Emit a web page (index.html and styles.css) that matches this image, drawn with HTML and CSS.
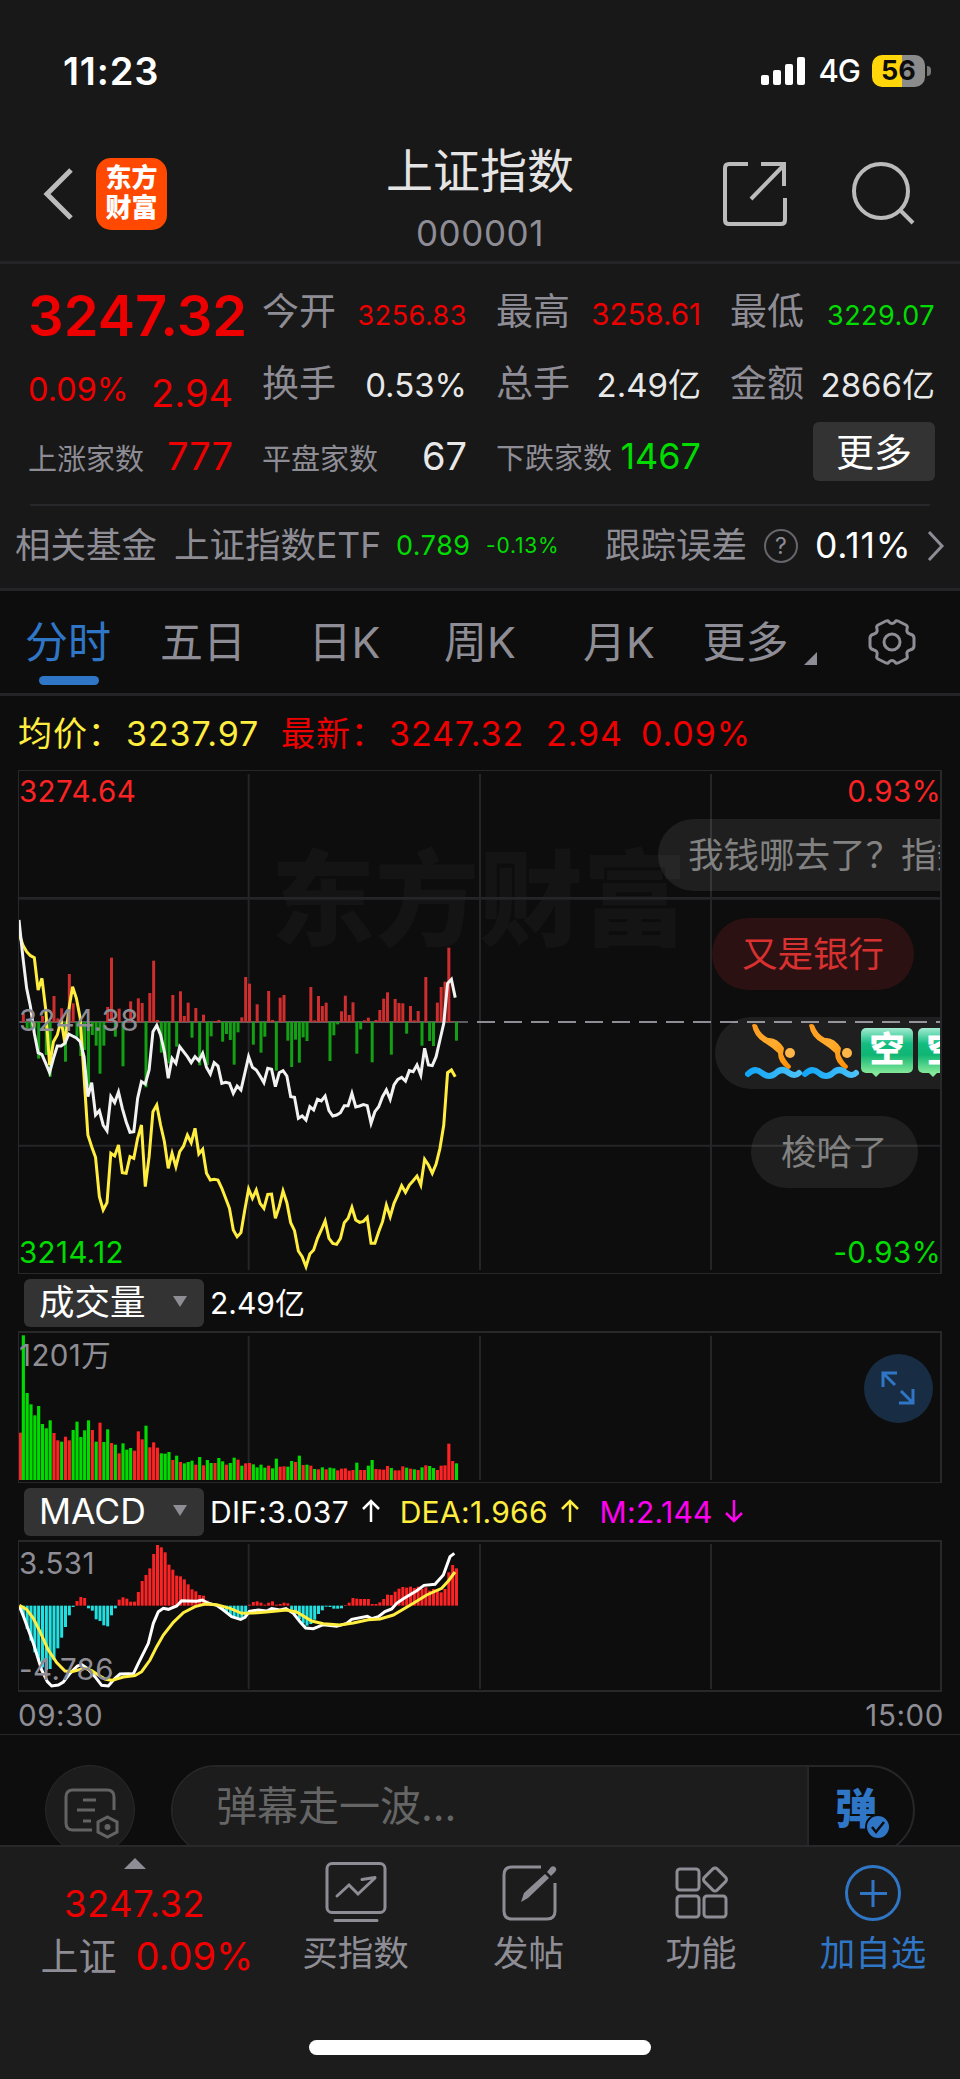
FILE: index.html
```html
<!DOCTYPE html>
<html lang="zh-CN">
<head>
    <meta charset="UTF-8">
    <meta name="viewport" content="width=device-width, initial-scale=1.0">
    <title>上证指数</title>
    <link rel="stylesheet" href="styles.css">
</head>
<body>
    <div class="status">
        <span class="time">11:23</span>
        <svg class="signal" width="44" height="28" viewBox="0 0 44 28">
            <rect x="0" y="18" width="8" height="10" rx="2"/>
            <rect x="12" y="13" width="8" height="15" rx="2"/>
            <rect x="24" y="7" width="8" height="21" rx="2"/>
            <rect x="36" y="0" width="8" height="28" rx="2"/>
        </svg>
        <span class="net">4G</span>
        <span class="battery">56</span>
        <span class="cap"></span>
    </div>

    <header class="header">
        <svg class="back" width="32" height="54" viewBox="0 0 32 54"><path d="M28 3 L4 27 L28 51"/></svg>
        <div class="logo"><span>东方</span><span>财富</span></div>
        <div class="title">
            <h1>上证指数</h1>
            <p>000001</p>
        </div>
        <svg class="share" width="64" height="64" viewBox="0 0 64 64">
            <path d="M25 2 H6 Q2 2 2 6 V58 Q2 62 6 62 H58 Q62 62 62 58 V36 M38 2 H61 V24 M61 3 L28 37"/>
        </svg>
        <svg class="search" width="64" height="64" viewBox="0 0 64 64">
            <circle cx="29" cy="29" r="27"/><path d="M48 48 L61 61"/>
        </svg>
    </header>

    <section class="quote">
        <div class="cell first"><b class="price">3247.32</b></div>
        <div class="cell"><span>今开</span><em class="s27 red">3256.83</em></div>
        <div class="cell"><span>最高</span><em class="s29 red">3258.61</em></div>
        <div class="cell"><span>最低</span><em class="s27 green">3229.07</em></div>
        <div class="cell first"><em class="rate">0.09%</em><em class="change">2.94</em></div>
        <div class="cell"><span>换手</span><em>0.53%</em></div>
        <div class="cell"><span>总手</span><em>2.49亿</em></div>
        <div class="cell"><span>金额</span><em>2866亿</em></div>
        <div class="cell"><span class="small">上涨家数</span><em class="s38 red">777</em></div>
        <div class="cell"><span class="small">平盘家数</span><em class="s38">67</em></div>
        <div class="cell"><span class="small">下跌家数</span><em class="s36 green">1467</em></div>
        <div class="cell last"><button type="button" class="more">更多</button></div>
    </section>

    <section class="fund">
        <span>相关基金</span>
        <span>上证指数ETF</span>
        <span class="s27 green">0.789</span>
        <span class="s21 green">-0.13%</span>
        <span>跟踪误差</span>
        <i class="help">?</i>
        <span class="white">0.11%</span>
        <svg width="18" height="32" viewBox="0 0 18 32"><path d="M2 2 L15 16 L2 30"/></svg>
    </section>

    <nav class="tabs">
        <a class="tab active">分时</a>
        <a class="tab">五日</a>
        <a class="tab">日K</a>
        <a class="tab">周K</a>
        <a class="tab">月K</a>
        <a class="tab">更多</a>
        <i class="corner"></i>
        <svg class="gear" width="48" height="48" viewBox="0 0 48 48">
            <path d="M18 3 Q20 2 21 4 Q24 7 27 4 Q28 2 30 3 L38 7 Q40 8 39 11 Q38 15 42 16 Q46 17 46 20 V28 Q46 31 42 32 Q38 33 39 37 Q40 40 38 41 L30 45 Q28 46 27 44 Q24 41 21 44 Q20 46 18 45 L10 41 Q8 40 9 37 Q10 33 6 32 Q2 31 2 28 V20 Q2 17 6 16 Q10 15 9 11 Q8 8 10 7 Z"/>
            <circle cx="24" cy="24" r="8"/>
        </svg>
    </nav>

    <div class="legend">
        <span class="yellow">均价：</span>
        <span class="yellow">3237.97</span>
        <span>最新：</span>
        <span>3247.32</span>
        <span>2.94</span>
        <span>0.09%</span>
    </div>

    <div class="chart main">
        <div class="watermark">东方财富</div>
        <svg id="price" viewBox="54 30 2772 1512">
            <path class="grid" d="M746 42 V1530 M1440 42 V1530 M2133 42 V1530 M56 1157 H2824"/>
            <path class="grid thick" d="M56 415 H2824"/>
        </svg>
        <span class="label top red2">3274.64</span>
        <span class="label middle">3244.38</span>
        <span class="label bottom green">3214.12</span>
        <span class="label top right red2">0.93%</span>
        <span class="label bottom right green">-0.93%</span>
        <div class="bullet b1">我钱哪去了？指数</div>
        <div class="bullet b2">又是银行</div>
        <div class="bullet b3">
            <svg class="swim" width="57" height="57" viewBox="0 0 57 57"><use href="#swimmer"/></svg>
            <svg class="swim" width="57" height="57" viewBox="0 0 57 57"><use href="#swimmer"/></svg>
            <i class="kong">空</i><i class="kong">空</i>
        </div>
        <div class="bullet b4">梭哈了</div>
    </div>

    <div class="indicator">
        <button type="button" class="select">成交量</button>
        <span>2.49亿</span>
    </div>
    <div class="chart volume">
        <svg id="volume" viewBox="54 183 2772 456">
            <path class="grid" d="M746 197 V630 M1440 197 V630 M2133 197 V630"/>
        </svg>
        <span class="label">1201万</span>
        <div class="expand">
            <svg width="34" height="34" viewBox="0 0 34 34">
                <path d="M2 16 V2 H16 M2 2 L14 14 M32 18 V32 H18 M32 32 L20 20"/>
            </svg>
        </div>
    </div>

    <div class="indicator">
        <button type="button" class="select">MACD</button>
        <span class="dif">DIF:3.037 <svg class="arrow" viewBox="0 0 18 24"><path d="M9 23 V2 M1 10 L9 2 L17 10"/></svg></span>
        <span class="dea">DEA:1.966 <svg class="arrow" viewBox="0 0 18 24"><path d="M9 23 V2 M1 10 L9 2 L17 10"/></svg></span>
        <span class="m">M:2.144 <svg class="arrow" viewBox="0 0 18 24"><path d="M9 1 V22 M1 14 L9 22 L17 14"/></svg></span>
    </div>
    <div class="chart macd">
        <svg id="macd" viewBox="54 30 2772 456">
            <path class="grid" d="M746 42 V477 M1440 42 V477 M2133 42 V477"/>
        </svg>
        <span class="label top">3.531</span>
        <span class="label bottom">-4.786</span>
    </div>
    <div class="axis"><span>09:30</span><span>15:00</span></div>

    <div class="danmu">
        <div class="setting">
            <svg width="56" height="52" viewBox="0 0 56 52">
                <path d="M28 42 H9 Q2 42 2 35 V9 Q2 2 9 2 H43 Q50 2 50 9 V22 M19 12 H32 M13 22 H31 M19 33 H27"/>
                <path d="M43.500 29 L53 34 V44 L43.500 49 L34 44 V34 Z"/>
                <circle cx="43.500" cy="39" r="1.500"/>
            </svg>
        </div>
        <div class="input">
            <span class="placeholder">弹幕走一波...</span>
            <div class="switch">
                弹
                <svg width="24" height="24" viewBox="0 0 24 24"><circle cx="12" cy="12" r="12"/><path d="M6 12 L10 17 L18 7"/></svg>
            </div>
        </div>
    </div>

    <footer class="footer">
        <div class="index">
            <i class="up"></i>
            <b>3247.32</b>
            <p>上证<em>0.09%</em></p>
        </div>
        <a class="item">
            <svg width="62" height="60" viewBox="0 0 62 60">
                <rect x="2" y="1.500" width="58" height="49" rx="5"/>
                <path d="M12 34 L24 23 L33 32 L50 16 M37 17.500 L50 15.500 M10 58.500 H52" stroke-linecap="round"/>
            </svg>
            <span>买指数</span>
        </a>
        <a class="item">
            <svg width="56" height="60" viewBox="0 0 56 60">
                <path d="M40 5 H11 Q3 5 3 13 V49 Q3 57 11 57 H46 Q54 57 54 49 V21"/>
                <path class="fill" d="M20 40 L23 31 L44 12 L48 16 L27 36 Z M46 10 L50 5 Q53 3 55 6 Q56 8 54 10 L50 14 Z"/>
            </svg>
            <span>发帖</span>
        </a>
        <a class="item">
            <svg width="54" height="60" viewBox="0 0 54 60">
                <rect x="3" y="7" width="22" height="21" rx="3"/>
                <rect x="3" y="34" width="22" height="21" rx="3"/>
                <rect x="30" y="34" width="22" height="21" rx="3"/>
                <rect x="32" y="8.500" width="18" height="18" rx="3" transform="rotate(45 41 17.500)"/>
            </svg>
            <span>功能</span>
        </a>
        <a class="item blue">
            <svg width="56" height="60" viewBox="0 0 56 60">
                <circle cx="28" cy="31" r="26.500"/><path d="M28 18 V45 M15 31.500 H42"/>
            </svg>
            <span>加自选</span>
        </a>
        <div class="home"></div>
    </footer>

    <svg width="0" height="0" class="defs">
        <defs>
            <linearGradient id="skin" x1="0" y1="0" x2="1" y2="1">
                <stop offset="0" stop-color="#ff9a1c"/><stop offset="0.500" stop-color="#ffac2e"/><stop offset="1" stop-color="#ff8c00"/>
            </linearGradient>
            <linearGradient id="sea"><stop offset="0" stop-color="#12a5f8"/><stop offset="1" stop-color="#4bc2f8"/></linearGradient>
            <g id="swimmer">
                <path d="M7 2 Q9 0 12 2 Q15 11 23 15 Q32 14 39 25 L38 31 Q40 37 46 43 Q46 46 43 46 Q33 40 33 30 Q28 25 20 20 Q9 14 7 2 Z" fill="url(#skin)"/>
                <circle cx="45" cy="30" r="5" fill="#ffb648"/>
                <path d="M3 51 Q10 44 17 50 Q24 56 31 50 Q37 44 44 50 Q50 54 54 50" fill="none" stroke="url(#sea)" stroke-width="6" stroke-linecap="round"/>
            </g>
        </defs>
    </svg>
    <script src="script.js"></script>
</body>
</html>
```
FILE: styles.css
```css
*{
    box-sizing: border-box;
}
body{
    margin: 0;
    width: 960px;
    height: 2079px;
    overflow: hidden;
    background-color: #0d0d0d;
    color: #8e8d95;
    font-family: Inter, "Noto Sans CJK SC", sans-serif;
    font-weight: 400;
}
h1, p{
    margin: 0;
    font-weight: 400;
}
em, i{
    font-style: normal;
}
svg{
    display: block;
    fill: none;
    flex: none;
}
button{
    border: none;
    padding: 0;
    font-family: inherit;
    color: #fff;
    background-color: #333;
}
.defs{
    position: absolute;
}
.red{
    color: #ee0000 !important;
}
.red2{
    color: #fb2323 !important;
}
.green{
    color: #00dc00 !important;
}
.s21{
    font-size: 21px !important;
    letter-spacing: 0.8px;
}
.s27{
    font-size: 27px !important;
    letter-spacing: 0.5px;
}
.s29{
    font-size: 29.500px !important;
}
.s36{
    font-size: 36px !important;
}
.s38{
    font-size: 38px !important;
}

/* 状态栏 */
.status{
    height: 141px;
    padding: 0 29px 0 63px;
    display: flex;
    align-items: center;
    background-color: #181818;
    color: #fff;
}
.time{
    font-size: 38px;
    font-weight: 600;
    letter-spacing: 0.8px;
    margin-right: auto;
}
.signal{
    fill: #fff;
}
.net{
    margin: 0 12px 0 13px;
    font-size: 31px;
    font-weight: 500;
    letter-spacing: -1px;
}
.battery{
    width: 53px;
    height: 32px;
    border-radius: 10px;
    line-height: 32px;
    text-align: center;
    font-size: 27px;
    font-weight: 700;
    color: #0d0d0d;
    background: linear-gradient(90deg, #ffd60a 57%, #8b8b8b 57%);
}
.cap{
    width: 4px;
    height: 10px;
    margin-left: 2px;
    border-radius: 0 4px 4px 0;
    background-color: #777;
}

/* 标题栏 */
.header{
    position: relative;
    height: 123px;
    padding: 0 44px 14px 43px;
    display: flex;
    align-items: center;
    background-color: #181818;
    border-bottom: 3px solid #242427;
}
.header svg{
    stroke: #bbb;
    stroke-width: 4;
}
.back{
    margin-right: 21px;
}
.header .back{
    stroke-width: 5;
}
.logo{
    width: 71px;
    height: 72px;
    margin-right: auto;
    padding-top: 5px;
    display: flex;
    flex-direction: column;
    align-items: center;
    border-radius: 15px;
    background-color: #ff4800;
    color: #fff;
    font-size: 26px;
    font-weight: 900;
    line-height: 30px;
}
.title{
    position: absolute;
    left: 0;
    right: 0;
    top: 0;
    text-align: center;
}
.title h1{
    font-size: 47px;
    line-height: 60px;
    color: #e4e4e4;
}
.title p{
    font-size: 35px;
    line-height: 64px;
    letter-spacing: 0.6px;
}
.share{
    margin-right: 65px;
}

/* 行情 */
.quote{
    height: 240px;
    padding: 12px 25px 0 28px;
    display: grid;
    grid-template-columns: repeat(4, minmax(0, 1fr));
    grid-auto-rows: 72px;
    column-gap: 29px;
    background-color: #181818;
    line-height: 72px;
    white-space: nowrap;
}
.cell{
    display: flex;
    justify-content: space-between;
    align-items: baseline;
}
.cell span{
    font-size: 37px;
}
.cell .small{
    font-size: 29px;
}
.cell em{
    font-size: 33px;
    color: #e8e8e8;
}
.first{
    align-items: center;
}
.first .price{
    padding-top: 7px;
    font-size: 56px;
    font-weight: 600;
    color: #ee0000;
}
.first .rate{
    padding-top: 12px;
    font-size: 32.500px;
    color: #ee0000;
}
.first .change{
    padding-top: 18px;
    font-size: 38px;
    color: #ee0000;
}
.last{
    align-items: center;
    justify-content: flex-end;
}
.more{
    width: 122px;
    height: 59px;
    margin-bottom: 9px;
    border-radius: 6px;
    line-height: 61px;
    font-size: 38px;
}
.fund{
    position: relative;
    height: 87px;
    padding-left: 15px;
    display: grid;
    grid-template-columns: 159px 222px 90px 119px 159px 51px 112px auto;
    align-items: center;
    background-color: #181818;
    border-bottom: 3px solid #242427;
    font-size: 35.500px;
    line-height: 84px;
    white-space: nowrap;
}
.fund::before{
    content: "";
    position: absolute;
    left: 30px;
    right: 30px;
    top: 0;
    height: 2px;
    background-color: #28282b;
}
.fund .white{
    color: #fff;
    letter-spacing: 0.8px;
}
.fund svg{
    stroke: #8e8d95;
    stroke-width: 3;
}
.help{
    width: 34px;
    height: 34px;
    border: 2px solid #66656c;
    border-radius: 100%;
    line-height: 30px;
    text-align: center;
    font-size: 23px;
}

/* 周期 */
.tabs{
    height: 105px;
    display: grid;
    grid-template-columns: 136px 134px 149px 122px 156px 97px 74px auto;
    border-bottom: 3px solid #242427;
    font-size: 43px;
    line-height: 103px;
}
.tab{
    position: relative;
    text-align: center;
}
.tab.active{
    color: #3076c6;
}
.tab.active::after{
    content: "";
    position: absolute;
    left: 39px;
    bottom: 9px;
    width: 60px;
    height: 9px;
    border-radius: 5px;
    background-color: #3076c6;
}
.corner{
    margin: 61px 0 0 10px;
    border-left: 13px solid transparent;
    border-bottom: 13px solid #8e8d95;
    width: 0;
    height: 0;
}
.gear{
    margin-top: 27px;
    stroke: #8e8d95;
    stroke-width: 3;
}
.legend{
    height: 74px;
    padding-left: 18px;
    display: grid;
    grid-template-columns: 108px 155px 108px 157px 95px auto;
    line-height: 75px;
    font-size: 34px;
    letter-spacing: 0.9px;
    color: #ee0000;
    white-space: nowrap;
}
.legend .yellow{
    color: #ffee3f;
}

/* 图表 */
.chart{
    position: relative;
    width: 924px;
    margin-left: 18px;
    overflow: hidden;
    border: 1px solid #28282a;
    border-right-width: 2px;
}
.chart > svg{
    position: absolute;
    left: -1px;
    top: -1px;
    width: 924px;
}
.main{
    height: 504px;
}
.volume{
    height: 152px;
    border-top-width: 2px;
}
.volume > svg, .macd > svg{
    top: -2px;
}
.macd{
    height: 152px;
    border-width: 2px 2px 2px 1px;
}
.grid{
    stroke: #252527;
    stroke-width: 6;
}
.grid.thick{
    stroke-width: 8;
}
.line{
    stroke-width: 9;
    stroke-linejoin: miter;
}
.label{
    position: absolute;
    left: 0;
    font-size: 29.500px;
    line-height: 36px;
    letter-spacing: 0.4px;
}
.label.top{
    top: 2px;
}
.label.bottom{
    bottom: 3px;
}
.label.right{
    left: auto;
    right: -1px;
}
.label.middle{
    top: 231px;
}
.volume .label{
    top: 4px;
}
.macd .label.top{
    top: 3px;
}
.watermark{
    position: absolute;
    left: 252px;
    top: 54px;
    font-size: 104px;
    font-weight: 900;
    line-height: 150px;
    color: #141414;
}
.bullet{
    position: absolute;
    height: 72px;
    padding: 0 30px;
    border-radius: 36px;
    background-color: rgba(255, 255, 255, 0.08);
    color: #828282;
    font-size: 35.500px;
    line-height: 74px;
    white-space: nowrap;
}
.b1{
    left: 639px;
    top: 48px;
}
.b2{
    left: 693px;
    top: 147px;
    background-color: #2c1112;
    color: #d93030;
}
.b3{
    left: 696px;
    top: 246px;
    height: 72px;
    display: flex;
    align-items: flex-start;
}
.b4{
    left: 732px;
    top: 345px;
}
.swim{
    margin-top: 6px;
}
.kong{
    position: relative;
    flex: none;
    width: 52px;
    height: 45px;
    margin: 11px 0 0 2px;
    border-radius: 5px;
    background: linear-gradient(#a5ecd3, #12bd80 35%, #10b573 60%, #85e99a);
    color: #fff;
    text-align: center;
    font-size: 35px;
    font-weight: 900;
    line-height: 43px;
}
.kong + .kong{
    margin-left: 5px;
}
.kong::after{
    content: "";
    position: absolute;
    left: 10px;
    top: 44px;
    border: 5px solid transparent;
    border-top-color: #85e99a;
    border-bottom: none;
}
.indicator{
    height: 57px;
    padding: 0 0 0 24px;
    display: flex;
    align-items: center;
    color: #fff;
    font-size: 30px;
    line-height: 48px;
    white-space: nowrap;
}
.select{
    position: relative;
    width: 180px;
    height: 48px;
    margin-right: 6px;
    padding-left: 15px;
    border-radius: 6px;
    text-align: left;
    line-height: 48px;
    font-size: 35.500px;
}
.select::after{
    content: "";
    position: absolute;
    right: 17px;
    top: 17px;
    border: 7px solid transparent;
    border-top: 11px solid #8e8d95;
    border-bottom: none;
}
.arrow{
    display: inline-block;
    width: 18px;
    height: 24px;
    margin-left: 4px;
    stroke: currentColor;
    stroke-width: 2.500;
}
.dif, .dea, .m{
    letter-spacing: 0.3px;
}
.dea{
    margin-left: 20px;
    color: #ffee3f;
}
.m{
    margin-left: 21px;
    color: #ff00f0;
}
.expand{
    position: absolute;
    left: 845px;
    top: 21px;
    width: 69px;
    height: 69px;
    padding: 17px;
    border-radius: 100%;
    background-color: #182c43;
    stroke: #3076c6;
    stroke-width: 3;
}
.axis{
    height: 43px;
    padding: 0 16px 0 18px;
    display: flex;
    justify-content: space-between;
    border-bottom: 1px solid #28282a;
    font-size: 29.500px;
    letter-spacing: 0.6px;
    line-height: 46px;
}

/* 弹幕 */
.danmu{
    height: 110px;
    padding: 30px 45px 0;
    display: flex;
    overflow: hidden;
}
.setting{
    width: 90px;
    height: 90px;
    margin-right: 36px;
    padding: 22px 0 0 18px;
    border: 1px solid #29292b;
    border-radius: 100%;
    background-color: #1c1c1c;
    stroke: #636363;
    stroke-width: 3;
}
.input{
    width: 744px;
    height: 90px;
    display: flex;
    overflow: hidden;
    border: 2px solid #262628;
    border-radius: 45px;
}
.placeholder{
    width: 636px;
    padding-left: 43px;
    background-color: #1c1c1c;
    border-right: 2px solid #262628;
    color: #656565;
    font-size: 41px;
    line-height: 79px;
}
.switch{
    position: relative;
    padding-left: 26px;
    color: #3076c6;
    font-size: 42px;
    font-weight: 900;
    line-height: 83px;
}
.switch svg{
    position: absolute;
    left: 57px;
    top: 48px;
    fill: #3076c6;
    stroke: #0d0d0d;
    stroke-width: 2.500;
    overflow: visible;
}
.switch circle{
    stroke-width: 2;
}
.switch path{
    fill: none;
}

/* 底部 */
.footer{
    position: relative;
    height: 234px;
    padding-left: 4px;
    display: grid;
    grid-template-columns: 265px 173px 173px 172px 172px;
    align-items: start;
    background-color: #1c1c1c;
    border-top: 2px solid #28282a;
    text-align: center;
}
.index{
    padding: 11px 4px 0 0;
    display: flex;
    flex-direction: column;
    align-items: center;
}
.up{
    border: 11px solid transparent;
    border-bottom-color: #8e8d95;
    border-top: none;
}
.index b{
    margin-top: 10px;
    font-size: 36.500px;
    font-weight: 400;
    letter-spacing: 0.4px;
    line-height: 50px;
    color: #ee0000;
}
.index p{
    margin-left: 25px;
    font-size: 38px;
    line-height: 54px;
}
.index em{
    margin-left: 19px;
    color: #ee0000;
}
.item{
    padding-top: 15px;
    display: flex;
    flex-direction: column;
    align-items: center;
    font-size: 35.500px;
    line-height: 64px;
    stroke: #8e8d95;
    stroke-width: 3;
}
.item span{
    stroke: none;
}
.item .fill{
    fill: #8e8d95;
    stroke: none;
}
.blue{
    color: #3076c6;
    stroke: #3076c6;
}
.home{
    position: absolute;
    left: 309px;
    bottom: 24px;
    width: 342px;
    height: 15px;
    border-radius: 8px;
    background-color: #fff;
}
```
FILE: script.js
```js
var STEP = 11.5;    // 每分钟宽度

// 白线：最新价
var last = [480,590,685,740,820,878,884,910,938,895,858,858,850,822,828,834,845,890,1010,968,1065,1052,1095,1112,1010,1028,996,1045,1085,1117,1115,1015,965,972,930,815,796,825,875,955,895,910,860,875,890,908,890,902,880,922,942,908,918,970,967,970,1000,978,990,940,890,922,930,948,968,925,928,980,938,932,948,1010,1012,1075,1068,1080,1040,1050,1018,1023,1008,1052,1068,1065,1058,1037,1037,1000,1041,1038,1034,1037,1090,1055,1040,1010,990,1018,975,958,952,963,932,935,915,945,865,915,917,890,840,790,670,658,713];
// 黄线：均价
var avg = [520,555,575,587,593,690,655,750,915,845,825,780,850,750,680,715,775,950,1125,1160,1192,1310,1350,1328,1180,1188,1155,1238,1240,1190,1195,1135,1095,1280,1190,1055,1035,1095,1145,1225,1180,1220,1175,1158,1125,1148,1105,1182,1168,1240,1260,1258,1260,1285,1315,1345,1410,1430,1418,1350,1287,1315,1290,1330,1345,1303,1302,1375,1340,1293,1328,1388,1412,1473,1490,1520,1482,1470,1435,1410,1383,1435,1450,1453,1435,1388,1375,1342,1380,1387,1384,1372,1450,1450,1415,1385,1335,1370,1330,1305,1277,1297,1275,1262,1248,1275,1198,1215,1240,1212,1165,1095,938,930,950];
// 红绿柱，正数为红
var power = [0,24,-20,-20,-20,-110,18,-99,-164,78,11,41,-119,144,56,-44,-102,-84,-194,-39,-71,-155,-71,45,193,-44,40,-133,0,62,0,71,57,-196,87,184,6,-92,-104,-124,81,-74,92,18,58,-47,42,-130,22,-129,-43,3,6,-59,-36,-54,-128,-31,14,135,115,-68,53,-92,-44,93,6,-146,73,81,-56,-135,-53,-122,-46,-57,105,5,78,48,58,-117,-40,-7,32,79,21,59,-95,-22,5,13,-121,6,36,70,89,-98,69,57,56,-35,48,5,33,-71,135,-57,-72,58,105,121,223,2,-56];
var vol = [142,-434,-261,-227,-194,-222,-168,-155,-179,141,119,-115,130,119,-150,-175,-129,-149,-179,150,-115,172,-114,-152,111,-106,80,-110,-91,-96,88,146,122,-163,98,113,97,-80,-79,-84,60,-73,54,-50,-54,-58,46,-69,44,-60,-51,51,-66,-56,46,-51,-67,61,-43,50,51,-47,-38,-46,-37,43,-35,-64,40,41,-40,-57,54,-73,45,-46,43,-33,32,-38,32,-37,-35,29,34,35,28,30,-52,30,30,-43,-60,33,32,31,42,-36,29,29,41,-37,34,-32,30,-38,44,-42,-36,30,43,44,109,57,-50];
var macd = [0,-30,-70,-105,-140,-165,-185,-193,-190,-163,-128,-96,-64,-29,-4,14,26,23,-8,-15,-41,-46,-59,-62,-29,-8,18,25,21,12,12,41,74,92,112,155,182,175,160,123,108,90,88,79,64,49,43,32,30,15,3,0,-2,-12,-20,-28,-36,-36,-36,-30,3,11,13,9,3,9,13,3,5,9,7,-12,-25,-40,-53,-60,-55,-42,-25,-14,-3,-4,-9,-9,-8,2,9,23,21,20,20,20,5,5,10,20,33,32,42,51,56,54,57,53,57,50,55,45,50,45,40,50,100,122,112];
var dif = '58,228 70,258 100,340 125,420 142,455 155,468 175,465 190,456 210,430 232,408 245,404 262,415 285,440 305,466 325,468 345,445 360,432 385,431 400,432 415,400 445,340 460,280 475,245 490,235 505,238 530,228 545,212 565,213 590,214 607,210 625,220 650,226 670,240 695,260 722,268 735,262 748,244 775,240 800,243 815,236 840,240 858,236 880,250 900,275 917,294 940,296 970,284 1010,289 1040,280 1055,268 1102,259 1115,266 1135,260 1155,245 1175,237 1190,220 1210,206 1250,182 1272,166 1305,163 1330,135 1350,80 1363,70';
var dea = '58,226 80,238 100,265 120,305 145,360 170,398 195,423 215,425 255,415 275,422 295,435 315,447 335,451 370,441 405,437 425,425 450,390 470,350 490,315 520,277 550,248 585,230 615,222 650,224 690,235 725,250 760,249 800,246 860,240 890,246 935,273 970,281 1020,285 1060,279 1105,269 1140,267 1180,255 1240,220 1280,195 1325,175 1345,153 1365,126';

var add = function(svg, tag, attrs){
    var el = document.createElementNS('http://www.w3.org/2000/svg', tag);
    for(var key in attrs){
        el.setAttribute(key, attrs[key]);
    }
    svg.appendChild(el);
}

var drawBars = function(svg, data, base, w, up, down, signed){
    for(var i=0; i<data.length; i++){
        var h = Math.abs(data[i]);
        var x = Math.max(57, 58.5 + STEP * i - w / 2);
        var y = (signed && data[i] < 0) ? base : base - h;
        add(svg, 'rect', {x: x, y: y, width: w, height: h, fill: data[i] < 0 ? down : up});
    }
}

var drawLine = function(svg, points, color){
    add(svg, 'polyline', {points: points, stroke: color, 'class': 'line'});
}

var toPoints = function(data){
    return data.map(function(y, i){
        return (57 + 11.48 * i) + ',' + y;
    }).join(' ');
}

var price = document.getElementById('price');
add(price, 'path', {d: 'M58 786 H1404', stroke: '#77777b', 'stroke-width': 5});
add(price, 'path', {d: 'M1431 786 H2822', stroke: '#8e8d95', 'stroke-width': 6, 'stroke-dasharray': '54 27'});
drawBars(price, power, 786, 9, '#cf2e2e', '#14a014', true);
drawLine(price, toPoints(avg), '#ffee3f');
drawLine(price, toPoints(last), '#f2f2f2');

drawBars(document.getElementById('volume'), vol, 630, 9.5, '#fb2323', '#00dc00', false);

var macdSvg = document.getElementById('macd');
drawBars(macdSvg, macd, 227, 9, '#fb2323', '#22e0e0', true);
drawLine(macdSvg, dif, '#fff');
drawLine(macdSvg, dea, '#ffee3f');
```
